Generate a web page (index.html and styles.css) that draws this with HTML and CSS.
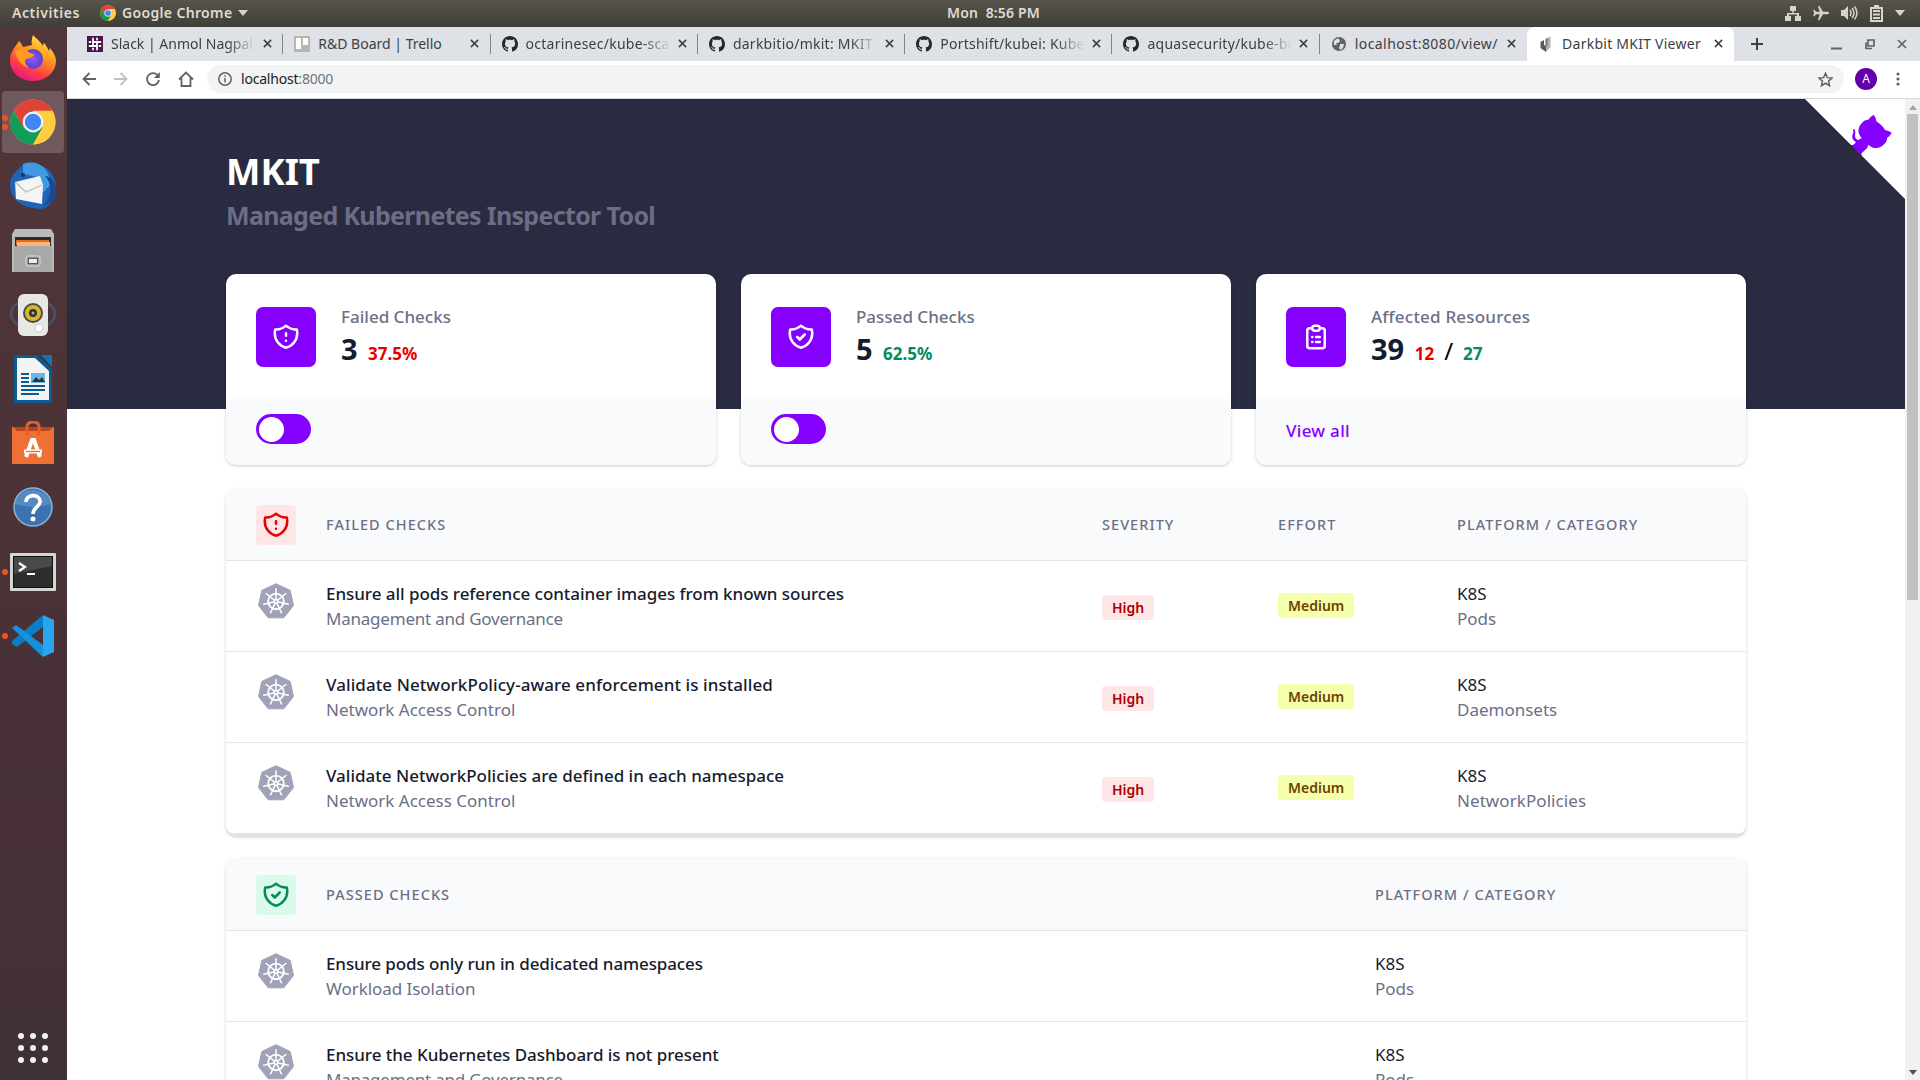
FILE: index.html
```html
<!DOCTYPE html>
<html lang="en">
<head>
<meta charset="utf-8">
<title>Darkbit MKIT Viewer</title>
<link rel="stylesheet" href="styles.css">
</head>
<body>
<svg class="defs" aria-hidden="true">
  <symbol id="github" viewBox="0 0 16 16"><path d="M8 0C3.58 0 0 3.58 0 8c0 3.54 2.29 6.53 5.47 7.59.4.07.55-.17.55-.38 0-.19-.01-.82-.01-1.49-2.01.37-2.53-.49-2.69-.94-.09-.23-.48-.94-.82-1.13-.28-.15-.68-.52-.01-.53.63-.01 1.08.58 1.23.82.72 1.21 1.87.87 2.33.66.07-.52.28-.87.51-1.07-1.78-.2-3.64-.89-3.64-3.95 0-.87.31-1.59.82-2.15-.08-.2-.36-1.02.08-2.12 0 0 .67-.21 2.2.82.64-.18 1.32-.27 2-.27s1.36.09 2 .27c1.53-1.04 2.2-.82 2.2-.82.44 1.1.16 1.92.08 2.12.51.56.82 1.27.82 2.15 0 3.07-1.87 3.75-3.65 3.95.29.25.54.73.54 1.48 0 1.07-.01 1.93-.01 2.2 0 .21.15.46.55.38A8.01 8.01 0 0 0 16 8c0-4.42-3.58-8-8-8z"/></symbol>
  <symbol id="cross" viewBox="0 0 10 10"><path d="M1 1l8 8M9 1l-8 8" fill="none" stroke="currentColor" stroke-width="1.7"/></symbol>
  <symbol id="shield-alert" viewBox="0 0 24 24"><path d="M20.618 5.984A11.955 11.955 0 0112 2.944a11.955 11.955 0 01-8.618 3.04A12.02 12.02 0 003 9c0 5.591 3.824 10.29 9 11.622 5.176-1.332 9-6.03 9-11.622 0-1.042-.133-2.052-.382-3.016zM12 9v2m0 4h.01"/></symbol>
  <symbol id="shield-check" viewBox="0 0 24 24"><path d="M9 12l2 2 4-4m5.618-4.016A11.955 11.955 0 0112 2.944a11.955 11.955 0 01-8.618 3.04A12.02 12.02 0 003 9c0 5.591 3.824 10.29 9 11.622 5.176-1.332 9-6.03 9-11.622 0-1.042-.133-2.052-.382-3.016z"/></symbol>
  <symbol id="clipboard" viewBox="0 0 24 24"><path d="M9 5H7a2 2 0 00-2 2v12a2 2 0 002 2h10a2 2 0 002-2V7a2 2 0 00-2-2h-2M9 5a2 2 0 002 2h2a2 2 0 002-2M9 5a2 2 0 012-2h2a2 2 0 012 2m-3 7h3m-3 4h3m-6-4h.01M9 16h.01"/></symbol>
  <symbol id="k8s" viewBox="0 0 36 36">
    <path d="M18 .7 32.2 7.4 35.5 22.5 25.8 34.8H10.2L.5 22.5 3.8 7.4z" fill="#a0a3b8" stroke="#a0a3b8" stroke-linejoin="round"/>
    <g fill="none" stroke="#fff" stroke-width="1.5" stroke-linecap="round"><circle cx="18" cy="18.4" r="7.8" stroke-width="1.9"/>
    <path d="M18 18.4V5.800M18 18.400l9.900-7.900M18 18.400l12.300 2.800M18 18.400l5.500 11.400M18 18.400l-5.500 11.400M18 18.400 5.700 21.200M18 18.400l-9.900-7.900"/></g>
    <circle cx="18" cy="18.400" r="2.600" fill="#fff"/><circle cx="18" cy="18.400" r="1" fill="#a0a3b8"/>
  </symbol>
  <symbol id="chrome" viewBox="0 0 46 46">
    <circle cx="23" cy="23" r="22.500" fill="#ffcd40"/>
    <path d="M23 23 13.300 28.600 3.500 11.800A22.500 22.500 0 0 1 42.500 11.800z" fill="#db4437"/>
    <path d="M3.500 11.800A22.500 22.500 0 0 0 23 45.500L32.700 28.600 23 23 13.300 28.600z" fill="#0f9d58"/>
    <path d="M23 11.800h19.500A22.500 22.500 0 0 1 23 45.500L32.700 28.600z" fill="#ffcd40"/>
    <circle cx="23" cy="23" r="10.400" fill="#f1f1f1"/><circle cx="23" cy="23" r="8.200" fill="#4285f4"/>
  </symbol>
</svg>

<header class="topbar">
  <div class="topbar-left">
    <span class="t-act">Activities</span>
    <svg class="app-icon"><use href="#chrome"/></svg>
    <span class="t-app">Google Chrome</span>
    <i class="caret"></i>
  </div>
  <div class="clock">Mon&nbsp; 8:56 PM</div>
  <div class="tray">
    <svg width="16" height="16" viewBox="0 0 16 16"><path d="M5 1h6v5H8.700v2H14v3h2v5h-6v-5h2V9.500H4V11h2v5H0v-5h2V8h5.300V6H5z"/></svg>
    <svg width="16" height="16" viewBox="0 0 16 16"><path d="M16 8c0-.8-.8-1.200-2-1.200H10L6.500 1H5l1.700 5.800H3L1.500 4.800H.3L1 8l-.7 3.200h1.200L3 9.200h3.700L5 15h1.500L10 9.200h4c1.200 0 2-.4 2-1.200z"/></svg>
    <svg width="17" height="16" viewBox="0 0 17 16"><path d="M0 5h3l4-4v14l-4-4H0z"/><path d="M9 5q2 3 0 6M11 3q4 5 0 10M13.500 1.500q5 6.500 0 13" fill="none" stroke="#d6d4ce" stroke-width="1.500"/></svg>
    <svg width="13" height="17" viewBox="0 0 13 17"><path d="M4 0h5v2h4v15H0V2h4zM2 4v11h9V4z" fill-rule="evenodd"/><path d="M3 5h7v2H3zM3 8.500h7v2H3zM3 12h7v2H3z"/></svg>
    <i class="caret"></i>
  </div>
</header>

<div class="desktop">
<aside class="dock">
  <div class="slot"><svg width="48" height="48" viewBox="0 0 48 48">
    <defs><linearGradient id="fx" x1=".8" y1="0" x2=".3" y2="1"><stop offset="0" stop-color="#fff44f"/><stop offset=".4" stop-color="#ff9a1f"/><stop offset=".75" stop-color="#ff3b47"/><stop offset="1" stop-color="#e31587"/></linearGradient>
    <radialGradient id="fp"><stop offset="0" stop-color="#9059ff"/><stop offset="1" stop-color="#5b3fd0"/></radialGradient></defs>
    <path d="M24 1c4 4 7 6 10 11 0-2 1-3 1-3 2 2 4 6 5 8l1-3c4 5 6 9 6 13a23 20 0 0 1-46 0C1 20 4 15 8 10l2-3c2 2 3 4 4 6l9-2c-1-4 0-7 1-10z" fill="url(#fx)"/>
    <circle cx="24" cy="25" r="10" fill="url(#fp)"/><path d="M6 17c5-3 11-2 15 2 3 0 4 1 4 2-1 3-5 3-8 4-2 3 0 7 4 9-8-1-13-8-15-17z" fill="#ff9a1f"/><path d="M24 15c7-2 12 3 11 10 3-4 2-10-3-14z" fill="#ffb52b"/></svg></div>
  <div class="slot active"><i class="dots two"></i><svg width="46" height="46"><use href="#chrome"/></svg></div>
  <div class="slot"><svg width="48" height="48" viewBox="0 0 48 48">
    <path d="M14 2C25-2 48 5 47 27c0 9-5 15-11 19l-4 1C18 46 2 42 1 23c0-7 4-13 9-16z" fill="#2063b8"/><path d="M14 2C28-3 42 6 41 23l-9 10-4-18-14-3z" fill="#3f9ae0"/><path d="M36 14c8 8 7 22-4 32l14-9c4-12-2-23-10-23z" fill="#174a93"/>
    <path d="M6 20 31 14 34 23 33 42 7 37z" fill="#f4f4f4"/><path d="M6 20l11 10 16-7" fill="none" stroke="#bbb" stroke-width="1.300"/><circle cx="14" cy="13" r="2" fill="#143467"/></svg></div>
  <div class="slot"><svg width="44" height="44" viewBox="0 0 44 44">
    <path d="M4 0h36l3 5v38H1V5z" fill="#b9b9b9"/><path d="M4 8h36v10H4z" fill="#2b2b2b"/><path d="M5 11h33v5H5z" fill="#e86a1c"/><path d="M6 13h33v5H6z" fill="#f6b77e"/><path d="M3 17h38v26H3z" fill="#a9a9a9"/><rect x="15" y="27" width="14" height="10" rx="2" fill="#999" stroke="#ddd"/><rect x="17.500" y="29.500" width="9" height="5" fill="#eee" stroke="#555"/></svg></div>
  <div class="slot"><svg width="48" height="44" viewBox="0 0 48 44">
    <ellipse cx="24" cy="21" rx="22" ry="15" fill="none" stroke="#496080" stroke-width="3" opacity=".6"/><rect x="9" y="1" width="30" height="42" rx="6" fill="#e7e7e5"/><circle cx="24" cy="20" r="10" fill="#4a4a48"/><circle cx="24" cy="20" r="8" fill="#d8b825"/><circle cx="24" cy="20" r="4" fill="#333"/><circle cx="24" cy="20" r="1.500" fill="#aaa"/><circle cx="30" cy="35" r="4" fill="#fff" stroke="#ccc"/></svg></div>
  <div class="slot"><svg width="40" height="48" viewBox="0 0 40 48">
    <path d="M1 0h23l15 14v34H1z" fill="#0b5a91"/><path d="M4 3h18l14 13v29H4z" fill="#f3f3f3"/><path d="M28 0h11v12z" fill="#1375b5"/><path d="M8 19h8M8 23h8M8 27h8M8 31h24M8 35h24M8 39h18" stroke="#0b5a91" stroke-width="2"/><path d="M18 18h14v10H18z" fill="#6db7e7"/><path d="M19 27l4-5 3 3 3-3 3 5z" fill="#333"/></svg></div>
  <div class="slot"><svg width="42" height="44" viewBox="0 0 42 44">
    <path d="M0 6h42v37H0z" fill="#ef7034"/><path d="M1 6h40l-4 4H5z" fill="#b8451c"/><path d="M15 14V6q0-5 6-5t6 5v8" fill="none" stroke="#e55e22" stroke-width="3"/><path d="M14 36l6-17h2l6 17M12 30.500h18" fill="none" stroke="#fff" stroke-width="4"/><path d="M14 30.500h14" stroke="#ef7034" stroke-width="1.300"/></svg></div>
  <div class="slot"><svg width="40" height="40" viewBox="0 0 40 40"><circle cx="20" cy="20" r="19" fill="#3a73b0" stroke="#8cb4da" stroke-width="1.500"/><path d="M1.500 17a19 18 0 0 1 37 0q-18 6-37 0z" fill="#6396c9" opacity=".7"/><path d="M13 15c0-9 15-8 14 0-.5 5-7 5-7 12" fill="none" stroke="#fff" stroke-width="3.600"/><circle cx="20" cy="32" r="2.500" fill="#fff"/></svg></div>
  <div class="slot"><i class="dots"></i><svg width="46" height="38" viewBox="0 0 46 38"><rect width="46" height="38" rx="1" fill="#d5d5d2"/><rect x="3.500" y="3.500" width="39" height="31" fill="#2c2e2d" stroke="#111"/><path d="M4 4h38v9L4 21z" fill="#484a49"/><path d="M9 10l6 4-6 4" fill="none" stroke="#fff" stroke-width="2.200"/><path d="M17 21h8" stroke="#fff" stroke-width="2"/></svg></div>
  <div class="slot"><i class="dots"></i><svg width="42" height="42" viewBox="0 0 42 42"><path d="M31 0v12L5 32 0 29v-3z" fill="#0c7cc4"/><path d="M0 13l4-3 27 20v12z" fill="#1591dc"/><path d="M31 0l11 5v32l-11 5z" fill="#2aa5f2"/></svg></div>
  <svg class="apps" width="32" height="32" viewBox="0 0 32 32" fill="#f2f1f0"><circle cx="4" cy="4" r="3"/><circle cx="16" cy="4" r="3"/><circle cx="28" cy="4" r="3"/><circle cx="4" cy="16" r="3"/><circle cx="16" cy="16" r="3"/><circle cx="28" cy="16" r="3"/><circle cx="4" cy="28" r="3"/><circle cx="16" cy="28" r="3"/><circle cx="28" cy="28" r="3"/></svg>
</aside>

<main class="browser">
  <nav class="tabs">
    <div class="tab"><svg class="fav" viewBox="0 0 16 16"><path d="M0 0h16v16H0z" fill="#4a154b"/><path d="M6 2.500v7M10 6.500v7M2.500 10h7M6.500 6h7M10 2.500v1M6 12.500v1M2.500 6h1M12.500 10h1" stroke="#fff" stroke-width="1.800" stroke-linecap="round"/></svg><span class="tt fade">Slack | Anmol Nagpal</span><svg class="x"><use href="#cross"/></svg></div>
    <div class="tab"><svg class="fav" viewBox="0 0 16 16"><rect width="16" height="16" rx="1" fill="#b8b5af"/><path d="M2 2h5v11H2zM9 2h5v7H9z" fill="#fff"/></svg><span class="tt">R&amp;D Board | Trello</span><svg class="x"><use href="#cross"/></svg></div>
    <div class="tab"><svg class="fav"><use href="#github"/></svg><span class="tt fade wide">octarinesec/kube-sca</span><svg class="x"><use href="#cross"/></svg></div>
    <div class="tab"><svg class="fav"><use href="#github"/></svg><span class="tt fade wide">darkbitio/mkit: MKIT</span><svg class="x"><use href="#cross"/></svg></div>
    <div class="tab"><svg class="fav"><use href="#github"/></svg><span class="tt fade wide">Portshift/kubei: Kube</span><svg class="x"><use href="#cross"/></svg></div>
    <div class="tab"><svg class="fav"><use href="#github"/></svg><span class="tt fade wide">aquasecurity/kube-be</span><svg class="x"><use href="#cross"/></svg></div>
    <div class="tab last"><svg class="fav" viewBox="0 0 16 16"><circle cx="8" cy="8" r="7" fill="#5f6368"/><path d="M3 5c2-2 4-3 5-2l1 2-2 2H5l1 2H3zM9 8h4l-1 4-3 2-1-3 1-1z" fill="#dee1e6"/></svg><span class="tt wider">localhost:8080/view/</span><svg class="x"><use href="#cross"/></svg></div>
    <div class="tab current"><svg class="fav" viewBox="0 0 16 16"><path d="M8 3.500 12.500 0v11L8 16z" fill="#b0b0b0"/><path d="M2.500 6 6 4v5l2 1v6l-5.500-4z" fill="#5a5a5a"/><path d="M7.500 3 9.500 1.500v8L7.500 11z" fill="#777"/></svg><span class="tt wide">Darkbit MKIT Viewer</span><svg class="x"><use href="#cross"/></svg></div>
    <svg class="plus" viewBox="0 0 12 12"><path d="M6 0v12M0 6h12" stroke="#3c4043" stroke-width="2"/></svg>
    <div class="winctl">
      <svg width="11" height="12" viewBox="0 0 11 12"><path d="M0 10.500h11" stroke="#5f6368" stroke-width="2"/></svg>
      <svg width="11" height="11" viewBox="0 0 11 11" fill="none" stroke="#5f6368" stroke-width="1.700"><path d="M4 1h6v6H4zM2 3.500v6h6"/></svg>
      <svg width="10" height="10" color="#5f6368"><use href="#cross"/></svg>
    </div>
  </nav>
  <div class="toolbar">
    <div class="navbtns">
      <svg width="14" height="14" viewBox="0 0 14 14"><path d="M14 7H1.500M7.500 1l-6 6 6 6"/></svg>
      <svg width="14" height="14" viewBox="0 0 14 14" opacity=".4"><path d="M0 7h12.500M6.500 1l6 6-6 6"/></svg>
      <svg width="14" height="14" viewBox="0 0 14 14"><path d="M12 3.700A6 6 0 1 0 13 8"/><path d="M13.800 0v6H8z" fill="#5f6368" stroke="none"/></svg>
      <svg width="16" height="16" viewBox="0 0 16 16"><path d="M1 8.500 8 1.500l7 7M3.500 7v8h9V7"/></svg>
    </div>
    <div class="omni">
      <svg width="14" height="14" viewBox="0 0 14 14" fill="none" stroke="#5f6368" stroke-width="1.500"><circle cx="7" cy="7" r="6.200"/><path d="M7 6v4.500M7 3.200v1.600"/></svg>
      <span class="url">localhost<em>:8000</em></span>
      <svg class="star" width="15" height="15" viewBox="0 0 24 24" fill="none" stroke="#5f6368" stroke-width="2.400"><path d="M12 2l3 7 7.500.6-5.700 5 1.700 7.400L12 18l-6.500 4 1.700-7.400-5.700-5L9 9z"/></svg>
    </div>
    <div class="avatar">A</div>
    <svg class="kebab" width="4" height="14" viewBox="0 0 4 14" fill="#5f6368"><circle cx="2" cy="2" r="1.600"/><circle cx="2" cy="7" r="1.600"/><circle cx="2" cy="12" r="1.600"/></svg>
  </div>

  <div class="viewport">
    <div class="page">
      <div class="hero">
        <svg class="corner" viewBox="0 0 250 250"><path d="M0 0l115 115h15l12 27 108 108V0z" fill="#fff"/><g fill="#8500ff"><path d="M128.300 109C113.800 99.700 119 89.600 119 89.600c3-6.900 1.500-11 1.500-11-1.300-6.600 2.900-2.300 2.900-2.300 3.900 4.600 2.100 11 2.100 11-2.600 10.300 5.100 14.600 8.900 15.900"/><path d="M115 115c-.1.100 3.700 1.500 4.800.4l13.900-13.800c3.200-2.400 6.200-3.200 8.500-3-8.400-10.600-14.700-24.200 1.600-40.600 4.700-4.600 10.200-6.800 15.900-7 .6-1.600 3.500-7.400 11.700-10.900 0 0 4.700 2.400 7.400 16.100 4.300 2.400 8.400 5.600 12.100 9.200 3.600 3.600 6.800 7.800 9.200 12.200 13.700 2.600 16.200 7.300 16.200 7.300-3.600 8.200-9.400 11.100-10.900 11.700-.3 5.800-2.400 11.200-7.100 15.900-16.400 16.400-30 10-40.600 1.600.2 2.800-1 6.800-5 10.800L141 136.500c-1.200 1.200.6 5.400.8 5.300z"/></g></svg>
        <h1 class="h-main">MKIT</h1>
        <h2 class="h-sub">Managed Kubernetes Inspector Tool</h2>
      </div>
      <div class="cards">
        <section class="card">
          <div class="card-body"><span class="tile"><svg class="ln" width="30" height="30"><use href="#shield-alert"/></svg></span>
            <div><div class="label">Failed Checks</div><div class="nums"><b class="big">3</b><b class="red">37.5%</b></div></div></div>
          <div class="card-foot"><span class="toggle"></span></div>
        </section>
        <section class="card">
          <div class="card-body"><span class="tile"><svg class="ln" width="30" height="30"><use href="#shield-check"/></svg></span>
            <div><div class="label">Passed Checks</div><div class="nums"><b class="big">5</b><b class="green">62.5%</b></div></div></div>
          <div class="card-foot"><span class="toggle"></span></div>
        </section>
        <section class="card">
          <div class="card-body"><span class="tile"><svg class="ln" width="30" height="30"><use href="#clipboard"/></svg></span>
            <div><div class="label wide">Affected Resources</div><div class="nums"><b class="big">39</b><b class="red">12</b><span class="slash">/</span><b class="green">27</b></div></div></div>
          <div class="card-foot"><a class="viewall">View all</a></div>
        </section>
      </div>

      <section class="table failed">
        <div class="row head"><span class="badge-icon bad"><svg class="ln" width="30" height="30"><use href="#shield-alert"/></svg></span><span class="th">Failed Checks</span><span class="th">Severity</span><span class="th">Effort</span><span class="th">Platform / Category</span></div>
        <div class="row"><svg class="k8s"><use href="#k8s"/></svg><div><div class="title snug">Ensure all pods reference container images from known sources</div><div class="sub tight">Management and Governance</div></div><div><span class="pill high">High</span></div><div><span class="pill med">Medium</span></div><div><div class="plat">K8S</div><div class="sub">Pods</div></div></div>
        <div class="row"><svg class="k8s"><use href="#k8s"/></svg><div><div class="title loose">Validate NetworkPolicy-aware enforcement is installed</div><div class="sub">Network Access Control</div></div><div><span class="pill high">High</span></div><div><span class="pill med">Medium</span></div><div><div class="plat">K8S</div><div class="sub">Daemonsets</div></div></div>
        <div class="row"><svg class="k8s"><use href="#k8s"/></svg><div><div class="title">Validate NetworkPolicies are defined in each namespace</div><div class="sub">Network Access Control</div></div><div><span class="pill high">High</span></div><div><span class="pill med">Medium</span></div><div><div class="plat">K8S</div><div class="sub loose">NetworkPolicies</div></div></div>
      </section>

      <section class="table passed">
        <div class="row head"><span class="badge-icon good"><svg class="ln" width="30" height="30"><use href="#shield-check"/></svg></span><span class="th">Passed Checks</span><span class="th">Platform / Category</span></div>
        <div class="row"><svg class="k8s"><use href="#k8s"/></svg><div><div class="title dense">Ensure pods only run in dedicated namespaces</div><div class="sub snug">Workload Isolation</div></div><div><div class="plat">K8S</div><div class="sub">Pods</div></div></div>
        <div class="row"><svg class="k8s"><use href="#k8s"/></svg><div><div class="title snug">Ensure the Kubernetes Dashboard is not present</div><div class="sub tight">Management and Governance</div></div><div><div class="plat">K8S</div><div class="sub">Pods</div></div></div>
      </section>
    </div>
    <div class="scrollbar"><i class="up"></i><i class="thumb"></i><i class="down"></i></div>
  </div>
</main>
</div>
</body>
</html>
```
FILE: styles.css
```css
* { box-sizing: border-box; }
body { margin: 0; width: 1920px; height: 1080px; overflow: hidden; display: flex; flex-direction: column; font-family: "Noto Sans", "Open Sans", sans-serif; color: #161b2d; }
h1, h2 { margin: 0; }
svg { flex: none; }
.defs { position: absolute; width: 0; height: 0; }

/* Desktop top bar */
.topbar { height: 27px; flex: none; display: grid; grid-template-columns: 1fr auto 1fr; align-items: center; background: linear-gradient(#57544b, #3f3e38); color: #dfdbd2; font-size: 14px; line-height: 18px; font-weight: 600; padding-bottom: 1px; }
.topbar-left { display: flex; align-items: center; padding-left: 12px; }
.t-act { letter-spacing: .55px; }
.t-app { letter-spacing: .35px; }
.app-icon { width: 16px; height: 16px; margin: 0 6px 0 20px; }
.caret { border: 5px solid transparent; border-top: 6px solid #d6d4ce; border-bottom: 0; margin-left: 6px; }
.clock { letter-spacing: .15px; padding-left: 67px; }
.tray { display: flex; align-items: center; justify-content: flex-end; gap: 12px; padding-right: 15px; fill: #d6d4ce; }
.tray .caret { margin-left: 0; }

.desktop { flex: 1; min-height: 0; display: flex; }

/* Launcher */
.dock { width: 67px; flex: none; display: flex; flex-direction: column; align-items: center; background: linear-gradient(#513639, #4a3237 50%, #443035 90%, #3d3233); padding: 0 1px 16px 0; }
.slot { position: relative; width: 62px; height: 62px; margin: 0 0 2.200px; display: flex; align-items: center; justify-content: center; border-radius: 4px; }
.slot.active { background: #70595c; }
.dots { position: absolute; left: 0; top: 28px; width: 6px; height: 6px; border-radius: 50%; background: #e95420; }
.dots.two { top: 24px; box-shadow: 0 9px #e95420; }
.apps { margin-top: auto; }

/* Browser chrome */
.browser { flex: 1; min-width: 0; display: flex; flex-direction: column; background: #fff; }
.tabs { height: 34px; flex: none; display: flex; align-items: center; background: #dee1e6; padding-left: 9px; color: #3c4043; }
.tab { width: 207.300px; height: 34px; display: flex; align-items: center; padding: 0 10px 1px 11px; position: relative; }
.tab::after { content: ""; position: absolute; right: 0; top: 7px; width: 1px; height: 20px; background: #80868b; }
.tab.last::after, .tab.current::after { display: none; }
.tab.current { background: #fff; border-radius: 8px 8px 0 0; }
.fav { width: 16px; height: 16px; fill: #24292e; }
.tt { margin-left: 8px; width: 146px; font-size: 14px; line-height: 20px; white-space: nowrap; overflow: hidden; }
.tt.wide { letter-spacing: .25px; }
.tt.wider { letter-spacing: .42px; }
.fade { -webkit-mask-image: linear-gradient(90deg, #000 80%, transparent 99%); mask-image: linear-gradient(90deg, #000 80%, transparent 99%); }
.x { width: 9px; height: 9px; margin-left: 6px; }
.plus { width: 12px; height: 12px; margin-left: 17px; }
.winctl { margin-left: auto; padding-right: 13px; display: flex; align-items: center; gap: 22px; }
.toolbar { height: 38px; flex: none; display: flex; align-items: center; border-bottom: 1px solid #d5d7db; padding-bottom: 1px; }
.navbtns { width: 140px; display: flex; align-items: center; gap: 18px; padding-left: 15px; fill: none; stroke: #5f6368; stroke-width: 1.800; }
.omni { flex: none; width: 1637px; height: 28px; border-radius: 14px; background: #f1f3f4; display: flex; align-items: center; padding: 0 11px; }
.url { margin-left: 9px; font-size: 14px; line-height: 20px; padding-bottom: 1px; letter-spacing: -.2px; color: #202124; }
.url em { font-style: normal; color: #70757a; }
.star { margin-left: auto; }
.avatar { width: 22px; height: 22px; margin-left: 11px; border-radius: 50%; background: #6200a9; color: #fff; font-size: 12px; line-height: 22px; text-align: center; }
.kebab { margin-left: 19px; }

/* Page */
.viewport { flex: 1; min-height: 0; display: flex; overflow: hidden; }
.page { flex: 1; overflow: hidden; }
.hero { position: relative; height: 310px; background: #292b41; padding: 49px 159px 0; }
.corner { position: absolute; right: 0; top: 0; width: 100px; height: 100px; }
.h-main { color: #fff; font-size: 36.500px; line-height: 46px; font-weight: 700; }
.h-sub { margin-top: 2px; color: #6c6e85; font-size: 25px; line-height: 38px; font-weight: 700; letter-spacing: -.67px; }
.cards { position: relative; width: 1520px; margin: -135px 0 0 159px; display: grid; grid-template-columns: repeat(3, 490px); gap: 25px; }
.card { height: 191px; border-radius: 10px; overflow: hidden; background: #fff; box-shadow: 0 1px 4px rgba(0,0,0,.12), 0 1px 2px rgba(0,0,0,.1); display: flex; flex-direction: column; }
.card-body { flex: none; height: 125px; display: flex; padding: 30px 30px 0; gap: 25px; }
.tile { width: 60px; height: 60px; margin-top: 3px; border-radius: 7px; background: #8500ff; color: #fff; display: flex; align-items: center; justify-content: center; }
.ln { fill: none; stroke: currentColor; stroke-width: 2; stroke-linecap: round; stroke-linejoin: round; }
.label { color: #6b6f87; font-size: 17px; line-height: 25px; font-weight: 500; }
.label.wide { letter-spacing: .2px; }
.nums { display: flex; align-items: baseline; line-height: 40px; }
.big { font-size: 29px; font-weight: 700; margin-right: 10.500px; }
.red, .green { font-size: 17px; font-weight: 700; }
.red { color: #e80000; }
.green { color: #058a5b; }
.slash { font-size: 24px; margin: 0 10px; color: #000; }
.card-foot { flex: none; height: 66px; background: #f9fafc; padding: 15px 30px; }
.toggle { display: block; width: 55px; height: 30px; border-radius: 15px; background: #8500ff; padding: 2.500px; }
.toggle::before { content: ""; display: block; width: 25px; height: 25px; border-radius: 50%; background: #fff; }
.viewall { display: block; line-height: 34px; font-size: 17px; font-weight: 500; letter-spacing: .3px; color: #8500ff; }
.table { width: 1520px; margin: 24px 0 0 159px; border-radius: 10px; overflow: hidden; background: #fff; box-shadow: 0 1px 4px rgba(0,0,0,.12), 0 1px 2px rgba(0,0,0,.1); }
.table.passed { margin-top: 23px; }
.row { display: grid; height: 91px; padding: 20px 0 0 30px; border-bottom: 1px solid #e2e4ea; }
.failed { border-bottom: 2px solid #e2e4ea; }
.failed .row { grid-template-columns: 70px 776px 176px 179px 1fr; }
.passed .row { grid-template-columns: 70px 1049px 1fr; }
.row.head { height: 72px; padding-top: 0; background: #f9fafc; align-items: center; }
.th { font-size: 14.500px; line-height: 20px; padding-bottom: 1px; font-weight: 500; letter-spacing: 1.050px; text-transform: uppercase; color: #6b6f87; }
.badge-icon { width: 40px; height: 40px; border-radius: 4px; display: flex; align-items: center; justify-content: center; }
.bad { background: #ffe6e6; color: #e80000; }
.good { background: #dafbea; color: #058a5b; }
.k8s { width: 36px; height: 36px; margin: 2px 0 0 2px; }
.title, .sub, .plat { font-size: 17px; line-height: 25px; white-space: nowrap; }
.title { font-weight: 500; }
.sub { color: #6b6f87; }
.snug { letter-spacing: -.045px; }
.dense { letter-spacing: -.11px; }
.tight { letter-spacing: -.22px; }
.loose { letter-spacing: .075px; }
.pill { display: block; width: max-content; height: 25px; line-height: 25px; padding: 0 10px; border-radius: 4px; font-size: 14px; font-weight: 600; }
.high { margin-top: 14px; background: #ffe6e6; color: #ab0000; }
.med { margin-top: 12px; background: #f6ffab; color: #6d4200; }
.scrollbar { width: 15px; flex: none; background: #f1f1f1; display: flex; flex-direction: column; align-items: center; }
.up, .down { border: 4px solid transparent; }
.up { border-bottom: 5px solid #a3a3a3; border-top: 0; margin-top: 6px; }
.down { border-top: 5px solid #505050; border-bottom: 0; margin: auto 0 5px; }
.thumb { width: 11px; height: 486px; margin-top: 4px; background: #c1c1c1; }
```
